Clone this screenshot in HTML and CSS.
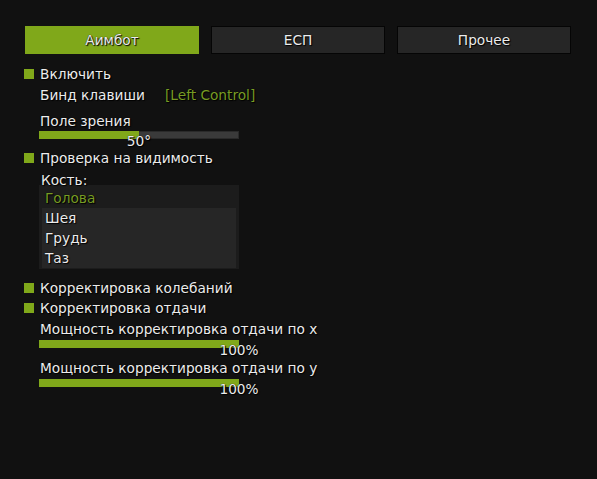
FILE: index.html
```html
<!DOCTYPE html>
<html lang="ru">
<head>
<meta charset="utf-8">
<title>Меню</title>
<link rel="stylesheet" href="styles.css">
</head>
<body>
<div class="panel">
  <div class="tabs">
    <div class="tab active">Аимбот</div>
    <div class="tab">ЕСП</div>
    <div class="tab">Прочее</div>
  </div>

  <div class="row check r-enable"><span class="box"></span>Включить</div>
  <div class="row sub r-bind"><span class="bind-label">Бинд клавиши</span><span class="bind-key">[Left Control]</span></div>
  <div class="row sub r-fov">Поле зрения</div>
  <div class="slider">
    <div class="bar"><div class="fill" style="width:50%"></div></div>
    <div class="value" style="left:50%">50°</div>
  </div>

  <div class="row check">
    <span class="box"></span>Проверка на видимость
  </div>
  <div class="row sub bone">Кость:</div>
  <div class="list">
    <div class="item selected">Голова</div>
    <div class="item">Шея</div>
    <div class="item">Грудь</div>
    <div class="item">Таз</div>
  </div>

  <div class="row check r-sway"><span class="box"></span>Корректировка колебаний</div>
  <div class="row check"><span class="box"></span>Корректировка отдачи</div>
  <div class="row sub r-power">Мощность корректировка отдачи по x</div>
  <div class="slider">
    <div class="bar"><div class="fill" style="width:100%"></div></div>
    <div class="value" style="left:100%">100%</div>
  </div>
  <div class="row sub r-power">Мощность корректировка отдачи по y</div>
  <div class="slider">
    <div class="bar"><div class="fill" style="width:100%"></div></div>
    <div class="value" style="left:100%">100%</div>
  </div>
</div>
</body>
</html>
```

FILE: styles.css
```css
html, body {
  margin: 0;
  padding: 0;
  background: #111111;
}

body {
  width: 597px;
  height: 479px;
  overflow: hidden;
  font-family: "DejaVu Sans", Verdana, sans-serif;
  font-size: 13.7px;
  color: #ececec;
  text-shadow: 1px 1px 1px #000, 0 0 1px #000;
}

.panel {
  padding: 26px 26px 0 24px;
}

.tabs {
  display: grid;
  grid-template-columns: repeat(3, 174px);
  column-gap: 12px;
  margin-left: 1px;
}

.tab {
  height: 26px;
  line-height: 27px;
  text-align: center;
  background: #262626;
  border: 1px solid #050505;
  color: #ececec;
}

.tab.active {
  background: #80a81a;
  border-color: #80a81a;
}

.row {
  height: 20px;
  line-height: 21px;
  white-space: nowrap;
}

.check {
  display: flex;
  align-items: center;
}

.box {
  width: 10px;
  height: 10px;
  background: #80a81a;
  margin-right: 6px;
  flex: none;
}

.sub {
  padding-left: 16px;
}

.r-enable {
  margin-top: 10px;
}

.r-bind {
  margin-top: 1px;
}

.bind-label {
  display: inline-block;
  width: 125px;
}

.bind-key {
  color: #789c24;
}

.r-fov {
  margin-top: 6px;
}

.slider {
  position: relative;
  width: 200px;
  height: 17px;
  margin-left: 15px;
}

.bar {
  height: 8px;
  background: #3a3a3a;
  box-shadow: inset 0 0 0 1px #2a2a2a;
}

.fill {
  height: 100%;
  background: #80a81a;
}

.value {
  position: absolute;
  top: 0;
  transform: translateX(-50%);
  line-height: 21px;
  white-space: nowrap;
}

.bone {
  height: 15px;
  padding-left: 17px;
  margin-top: 2px;
}

.list {
  width: 194px;
  margin-left: 15px;
  padding: 3px 3px 1px;
  background: #1c1c1c;
}

.item {
  height: 20px;
  line-height: 21px;
  padding-left: 3px;
  background: #262626;
}

.item.selected {
  background: transparent;
  color: #789c24;
}

.r-sway {
  margin-top: 9px;
}

.r-power {
  height: 21px;
  margin-top: 1px;
}
```
